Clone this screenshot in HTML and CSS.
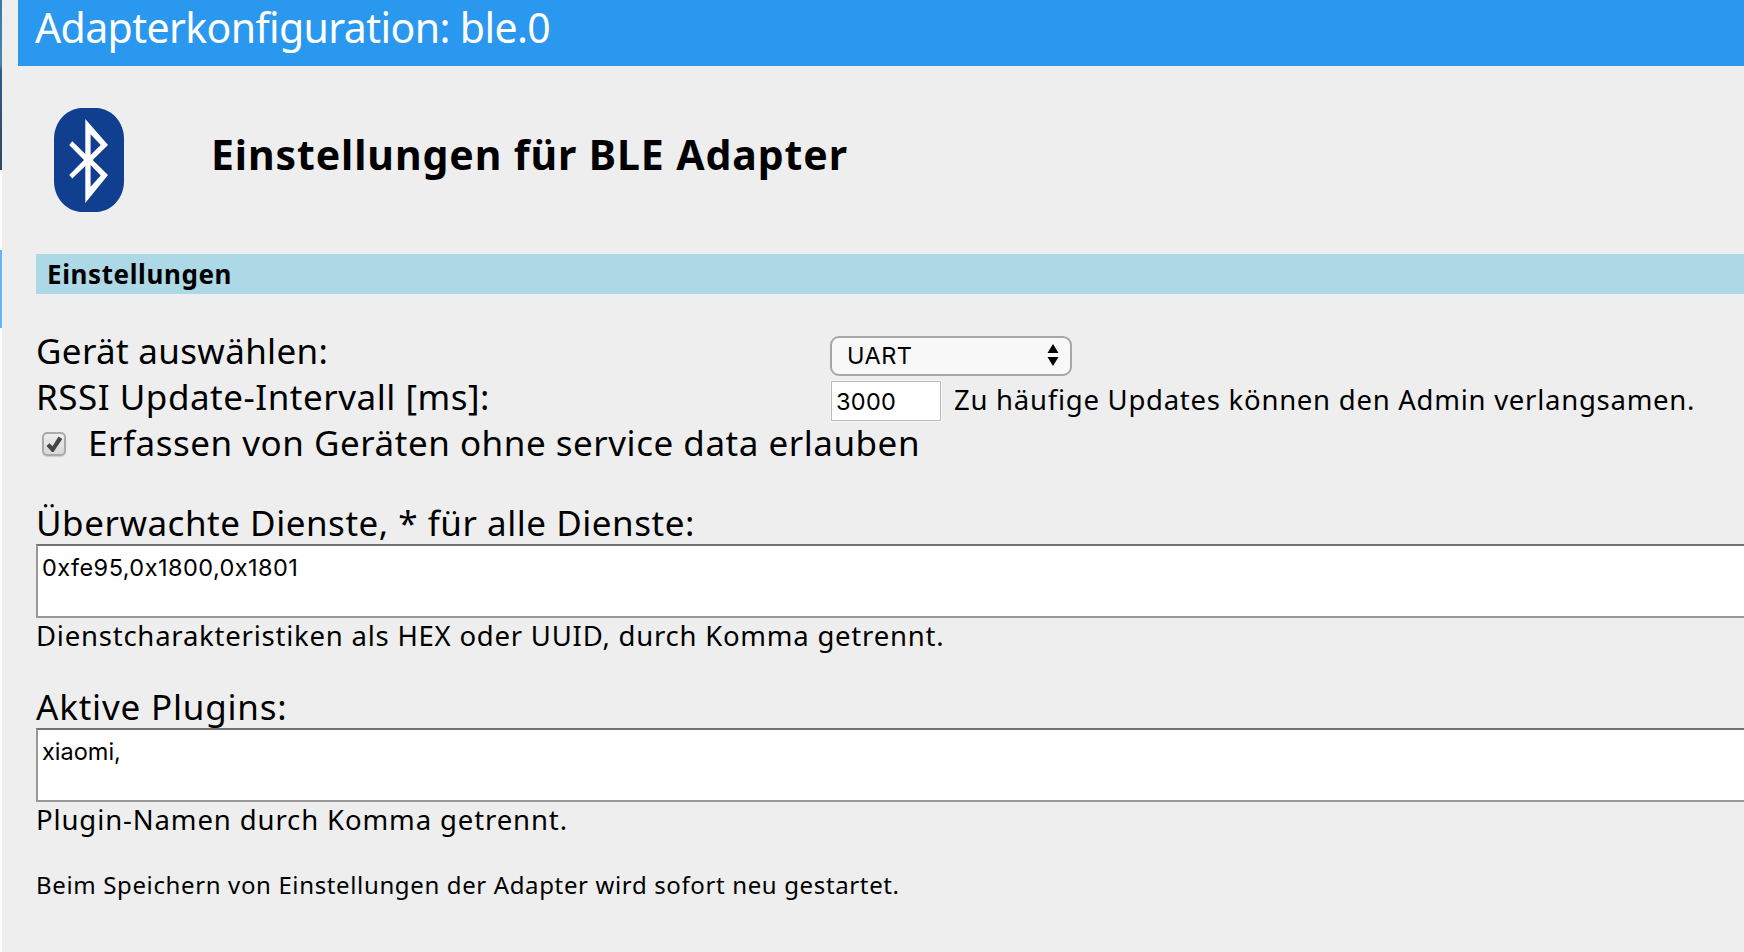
FILE: index.html
```
<!DOCTYPE html>
<html lang="de">
<head>
    <meta charset="UTF-8">
    <title>Adapterkonfiguration: ble.0</title>
    <link rel="stylesheet" href="styles.css">
</head>
<body>
    <div class="backdrop">
        <div class="backdrop-photo"></div>
        <div class="backdrop-active"></div>
    </div>
    <div class="dialog">
        <div class="dialog-title">Adapterkonfiguration: ble.0</div>
        <div class="content">
            <div class="page-header">
                <svg class="logo" viewBox="0 0 70 104">
                    <path fill="#103f8f" d="M27 0H43C58 1 70 14 70 31V73C70 90 58 103 43 104H27C12 103 0 90 0 73V31C0 14 12 1 27 0Z"/>
                    <path fill="#fff" fill-rule="evenodd" d="M31.3 11L54 37L38.7 52L54 67L31.3 95V58L18.3 70.5L15.2 67L30 52L15.2 37L18.3 33.3L31.3 46ZM36.6 26.3V47L46.7 37ZM36.6 57V78.7L46.7 67.5Z"/>
                </svg>
                <h1>Einstellungen für BLE Adapter</h1>
            </div>
            <div class="section">Einstellungen</div>
            <div class="form">
                <div class="row">
                    <label class="row-label label-device" for="device">Gerät auswählen:</label>
                    <button class="select" id="device">UART
                        <svg class="arrows" viewBox="0 0 12 22"><path d="M6 0L11.5 9H.5ZM6 22L.5 13H11.5Z"/></svg>
                    </button>
                </div>
                <div class="row">
                    <label class="row-label" for="rssi">RSSI Update-Intervall [ms]:</label>
                    <input class="number" id="rssi" type="text" value="3000">
                    <span class="hint">Zu häufige Updates können den Admin verlangsamen.</span>
                </div>
                <div class="row">
                    <span class="checkbox"><svg viewBox="0 0 20 20"><path d="M2.5 12L5.5 9.3L8.5 12.3L14.5 2.5L18.3 5L9.5 18H8Z"/></svg></span>
                    <label>Erfassen von Geräten ohne service data erlauben</label>
                </div>
            </div>
            <div class="group">
                <label for="services">Überwachte Dienste, * für alle Dienste:</label>
                <textarea class="services" id="services">0xfe95,0x1800,0x1801</textarea>
                <div class="help">Dienstcharakteristiken als HEX oder UUID, durch Komma getrennt.</div>
            </div>
            <div class="group group-plugins">
                <label for="plugins">Aktive Plugins:</label>
                <textarea id="plugins">xiaomi,</textarea>
                <div class="help">Plugin-Namen durch Komma getrennt.</div>
            </div>
            <div class="note">Beim Speichern von Einstellungen der Adapter wird sofort neu gestartet.</div>
        </div>
    </div>
</body>
</html>
```
FILE: styles.css
```
* {
    box-sizing: border-box;
}
body {
    margin: 0;
    height: 952px;
    display: flex;
    overflow: hidden;
    background-color: #eee;
    color: #000;
    font-family: "Noto Sans", sans-serif;
    font-size: 35px;
    letter-spacing: 0.52px;
    white-space: nowrap;
}
/* strip of the page behind the dialog */
.backdrop {
    width: 2px;
    background-color: #fff;
}
.backdrop-photo {
    height: 170px;
    background: linear-gradient(#3d76a8, #4c82ad 38%, #33597c 42%, #2c4a63);
}
.backdrop-active {
    height: 78px;
    margin-top: 80px;
    background-color: #64b5f6;
}
.dialog {
    flex: 1;
    min-width: 0;
    padding-left: 16px;
}
.dialog-title {
    height: 66px;
    padding-left: 17px;
    background-color: #2b98f0;
    color: #fff;
    font-size: 41px;
    letter-spacing: -0.6px;
    line-height: 54px;
}
.content {
    padding-left: 18px;
}
.page-header {
    height: 188px;
    padding-left: 18px;
    display: flex;
    align-items: center;
}
.logo {
    width: 70px;
    height: 104px;
}
h1 {
    margin: 0 0 12px 87px;
    font-size: 41px;
    letter-spacing: 0.9px;
    line-height: 52px;
}
.section {
    height: 40px;
    padding-left: 11px;
    background-color: #add8e6;
    font-size: 26px;
    font-weight: bold;
    letter-spacing: 0.6px;
    line-height: 40px;
}
.form {
    margin-top: 34px;
}
.row {
    height: 46px;
    display: flex;
    align-items: flex-start;
    line-height: 46px;
}
.row-label {
    width: 794px;
}
.label-device {
    letter-spacing: 0.33px;
}
.select {
    width: 242px;
    height: 40px;
    margin-top: 8px;
    padding: 0 11px 2px 15px;
    display: flex;
    align-items: center;
    justify-content: space-between;
    border: 2px solid #a6a6a6;
    border-radius: 9px;
    background-color: #f8f8f8;
    color: #000;
    font-family: Inter, sans-serif;
    font-size: 23.5px;
    letter-spacing: 0.5px;
}
.arrows {
    width: 12px;
    height: 22px;
}
.number {
    width: 110px;
    height: 40px;
    margin: 7px 0 0 1px;
    padding: 0 4px;
    border: 1px solid #bbb;
    outline: 1px solid #f8f8f8;
    background-color: #fff;
    font-family: Inter, sans-serif;
    font-size: 23.5px;
    letter-spacing: 0.3px;
}
.hint {
    margin: 3px 0 0 13px;
    font-size: 27.5px;
    letter-spacing: 0.74px;
}
.checkbox {
    width: 24px;
    height: 24px;
    margin: 12px 22px 0 6px;
    border: 2px solid #aaa;
    border-radius: 5px;
    background: linear-gradient(#eee, #d8d8d8);
    box-shadow: 0 1px 1px #ccc;
    line-height: 0;
}
.checkbox path {
    fill: #444;
}
.group {
    margin-top: 34px;
}
.group-plugins {
    margin-top: 32px;
}
.group label {
    display: block;
    height: 44px;
    line-height: 46px;
}
.group-plugins label {
    letter-spacing: 0.8px;
}
textarea {
    display: block;
    width: 1760px;
    height: 74px;
    padding: 8px 4px;
    border: 2px solid #999;
    border-top-color: #737373;
    background-color: #fff;
    font-family: Inter, sans-serif;
    font-size: 23.5px;
    line-height: 28px;
    resize: none;
}
.services {
    letter-spacing: 0.45px;
}
.help {
    height: 34px;
    font-size: 27.5px;
    letter-spacing: 0.77px;
    line-height: 36px;
}
.group-plugins .help {
    letter-spacing: 0.88px;
}
.note {
    margin-top: 31px;
    font-size: 24px;
    letter-spacing: 0.635px;
    line-height: 36px;
}
```
